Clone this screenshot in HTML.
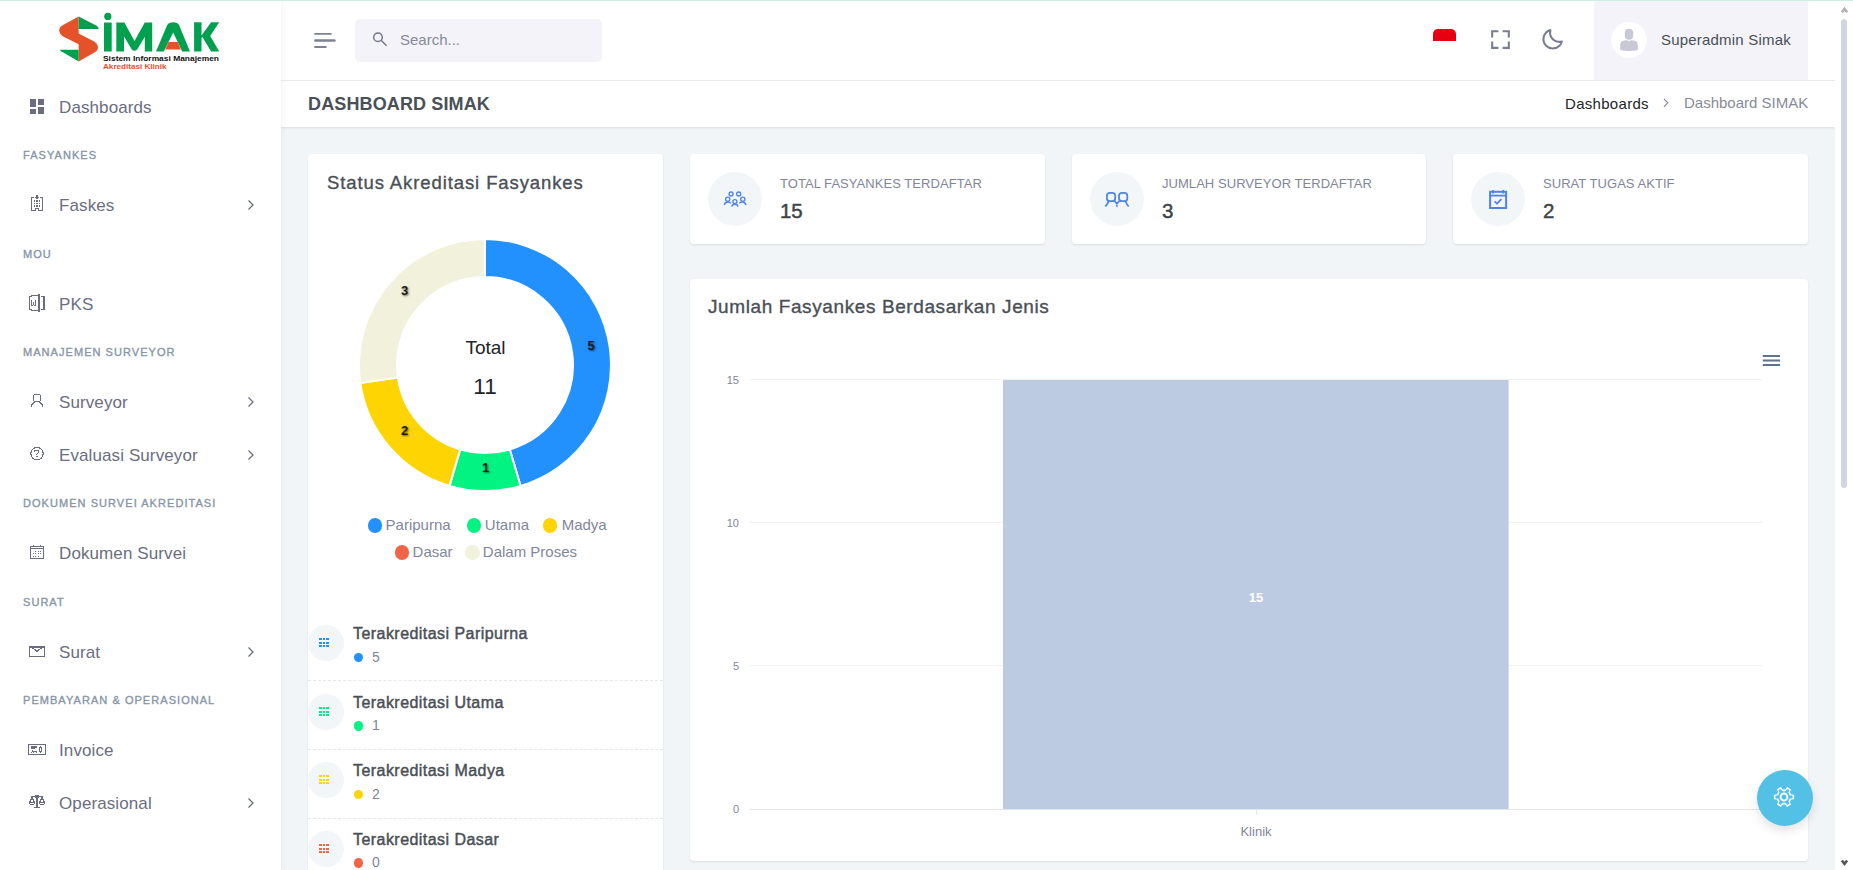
<!DOCTYPE html>
<html><head><meta charset="utf-8">
<style>
*{box-sizing:border-box;margin:0;padding:0}
html,body{width:1853px;height:870px;overflow:hidden}
body{font-family:"Liberation Sans",sans-serif;background:#f1f5f8;position:relative;color:#495057}
.abs{position:absolute}
#topline{left:0;top:0;width:1853px;height:1px;background:#d3ece0;z-index:50}
#sidebar{left:0;top:0;width:281px;height:870px;background:#fff;box-shadow:1px 0 5px rgba(0,0,0,.05);z-index:5}
.mi{position:absolute;left:0;width:281px;height:20px;font-size:17px;color:#6a6e80;white-space:nowrap}
.mi .t{position:absolute;left:59px;top:1.5px;line-height:20px;letter-spacing:.1px}
.mi svg.ic{position:absolute;left:28px;top:1px}
.mi .chev{position:absolute;left:246px;top:5px}
.mt{position:absolute;left:23px;font-size:11px;color:#8795a7;letter-spacing:1.05px;font-weight:normal;-webkit-text-stroke:.35px #8795a7;white-space:nowrap;line-height:12px}
#header{left:281px;top:0;width:1554px;height:81px;background:#fff;border-bottom:1px solid #e9ebef;z-index:3}
#titlebar{left:281px;top:81px;width:1554px;height:46px;background:#fff;box-shadow:0 1px 2px rgba(56,65,74,.12);z-index:2}
.card{position:absolute;background:#fff;border-radius:4px;box-shadow:0 1px 2px rgba(56,65,74,.12)}
#scroll{left:1835px;top:0;width:18px;height:870px;background:#fff;z-index:40}
</style></head><body>
<div id="topline" class="abs"></div>

<!-- SIDEBAR -->
<div id="sidebar" class="abs">
  <!-- logo -->
  <svg class="abs" style="left:0;top:0" width="281" height="80" viewBox="0 0 281 80">
    <g transform="translate(50,8) scale(0.09714)">
      <path d="M295,88 L130,178 Q88,205 95,240 Q102,275 130,290 L295,372 L295,550 L470,450 Q500,430 492,392 Q485,362 455,345 L295,262 Z" fill="#e5522a"/>
      <path d="M295,88 L475,180 Q505,198 500,215 L295,215 Z" fill="#00a04e"/>
      <path d="M100,430 L295,430 L295,550 L115,445 Q98,435 100,430 Z" fill="#00a04e"/>
    </g>
    <g fill="#00a04e">
      <rect x="104" y="22.6" width="7.7" height="28.9" rx="0.6"/>
      <circle cx="107.8" cy="16.4" r="3.6"/>
      <path d="M116.3,51.5 L116.3,22.6 L124.4,22.6 L134.5,41 L144.8,22.6 L152.2,22.6 L152.2,51.5 L144.8,51.5 L144.8,36.8 L137.2,49.6 Q134.5,52 131.8,49.6 L124,36.6 L124,51.5 Z"/>
      <path d="M156,51.5 L167.2,25 Q169,22.3 173.2,22.3 Q177.4,22.3 179,25 L190,51.5 L182.2,51.5 L173.2,32.4 L163.8,51.5 Z"/>
      <path d="M194.1,22.3 L201.5,22.3 L201.5,35.6 L211.1,22.3 L219.2,22.3 L210.2,36 L219.2,51.5 L211.1,51.5 L202.4,37 L201.5,38 L201.5,51.5 L194.1,51.5 Z"/>
    </g>
    <path d="M168.6,42 L177.8,42 L180.8,49.4 L165.3,49.4 Z" fill="#e5522a"/>
    <text x="103" y="60.5" font-family="Liberation Sans" font-weight="bold" font-size="8" fill="#111" textLength="116" lengthAdjust="spacingAndGlyphs">Sistem Informasi Manajemen</text>
    <text x="103" y="68.7" font-family="Liberation Sans" font-weight="bold" font-size="8" fill="#e5522a" textLength="63.6" lengthAdjust="spacingAndGlyphs">Akreditasi Klinik</text>
  </svg>

  <div class="mi" style="top:96px">
    <svg class="ic" width="18" height="18" viewBox="0 0 18 18" style="left:28px;top:1px"><g fill="#6a6e80"><rect x="2" y="2" width="6" height="8"/><rect x="10" y="2" width="6" height="6"/><rect x="2" y="12" width="6" height="5"/><rect x="10" y="10" width="6" height="7"/></g></svg>
    <span class="t">Dashboards</span>
  </div>
  <div class="mt" style="top:149px">FASYANKES</div>
  <div class="mi" style="top:194px">
    <svg class="ic" width="26" height="26" viewBox="0 0 26 26" style="left:24px;top:-4px" shape-rendering="crispEdges"><g fill="#6a6e80"><rect x="7" y="7" width="1" height="14"/><rect x="18" y="7" width="1" height="14"/><rect x="7" y="20" width="5" height="1"/><rect x="14" y="20" width="5" height="1"/><rect x="11" y="18" width="1" height="3"/><rect x="14" y="18" width="1" height="3"/><rect x="11" y="18" width="4" height="1"/><rect x="7" y="7" width="3" height="1"/><rect x="16" y="7" width="3" height="1"/><rect x="12" y="5" width="2" height="4"/><rect x="11" y="7" width="4" height="1"/><rect x="10" y="10" width="1" height="2"/><rect x="12" y="10" width="2" height="2"/><rect x="15" y="10" width="1" height="2"/><rect x="10" y="13" width="1" height="1"/><rect x="12" y="13" width="2" height="1"/><rect x="15" y="13" width="1" height="1"/><rect x="10" y="15" width="1" height="2"/><rect x="12" y="15" width="2" height="2"/><rect x="15" y="15" width="1" height="2"/></g></svg>
    <span class="t">Faskes</span>
    <svg class="chev" width="10" height="12" viewBox="0 0 10 12"><path d="M2.5,1.5 L7,6 L2.5,10.5" fill="none" stroke="#6a6e80" stroke-width="1.3"/></svg>
  </div>
  <div class="mt" style="top:248px">MOU</div>
  <div class="mi" style="top:293px">
    <svg class="ic" width="26" height="26" viewBox="0 0 26 26" style="left:24px;top:-3px" shape-rendering="crispEdges"><g fill="#6a6e80"><rect x="5" y="6" width="1" height="14"/><rect x="5" y="6" width="3" height="1"/><rect x="7" y="5" width="8" height="1"/><rect x="7" y="20" width="8" height="1"/><rect x="5" y="19" width="3" height="1"/><rect x="14" y="4" width="2" height="18"/><rect x="17" y="6" width="3" height="1"/><rect x="19" y="6" width="2" height="14"/><rect x="17" y="19" width="3" height="1"/><rect x="7" y="10" width="1" height="6"/><rect x="11" y="10" width="1" height="6"/><rect x="8" y="15" width="1" height="1"/><rect x="10" y="15" width="1" height="1"/><rect x="9" y="12" width="1" height="3"/></g></svg>
    <span class="t">PKS</span>
  </div>
  <div class="mt" style="top:346px">MANAJEMEN SURVEYOR</div>
  <div class="mi" style="top:391px">
    <svg class="ic" width="26" height="26" viewBox="0 0 26 26" style="left:24px;top:-3px" shape-rendering="crispEdges"><g fill="#6a6e80"><rect x="10" y="6" width="6" height="1"/><rect x="10" y="13" width="6" height="1"/><rect x="9" y="7" width="1" height="6"/><rect x="16" y="7" width="1" height="6"/></g><path d="M10.8,14 L7.8,16.8 V19 M15.2,14 L18.2,16.8 V19" fill="none" stroke="#6a6e80" stroke-width="1.1"/></svg>
    <span class="t">Surveyor</span>
    <svg class="chev" width="10" height="12" viewBox="0 0 10 12"><path d="M2.5,1.5 L7,6 L2.5,10.5" fill="none" stroke="#6a6e80" stroke-width="1.3"/></svg>
  </div>
  <div class="mi" style="top:444px">
    <svg class="ic" width="26" height="26" viewBox="0 0 26 26" style="left:24px;top:-3px" shape-rendering="crispEdges"><circle cx="13" cy="12.6" r="6.2" fill="none" stroke="#6a6e80" stroke-width="1.1"/><path d="M10.9,11 V9.9 H14.6 V11.4 L12.9,13 V13.8" fill="none" stroke="#6a6e80" stroke-width="1.1"/><rect x="12" y="15" width="2" height="1" fill="#6a6e80"/></svg>
    <span class="t">Evaluasi Surveyor</span>
    <svg class="chev" width="10" height="12" viewBox="0 0 10 12"><path d="M2.5,1.5 L7,6 L2.5,10.5" fill="none" stroke="#6a6e80" stroke-width="1.3"/></svg>
  </div>
  <div class="mt" style="top:497px">DOKUMEN SURVEI AKREDITASI</div>
  <div class="mi" style="top:542px">
    <svg class="ic" width="26" height="26" viewBox="0 0 26 26" style="left:24px;top:-3px" shape-rendering="crispEdges"><g fill="#6a6e80"><rect x="6" y="7" width="14" height="1"/><rect x="6" y="19" width="14" height="1"/><rect x="6" y="7" width="1" height="13"/><rect x="19" y="7" width="1" height="13"/><rect x="6" y="9" width="14" height="1"/><rect x="9" y="6" width="1" height="2"/><rect x="16" y="6" width="1" height="2"/><rect x="11" y="12" width="1" height="1"/><rect x="14" y="12" width="1" height="1"/><rect x="16" y="12" width="1" height="1"/><rect x="9" y="14" width="1" height="1"/><rect x="11" y="14" width="1" height="1"/><rect x="14" y="14" width="1" height="1"/><rect x="16" y="14" width="1" height="1"/><rect x="9" y="17" width="1" height="1"/><rect x="11" y="17" width="1" height="1"/><rect x="14" y="17" width="1" height="1"/></g></svg>
    <span class="t">Dokumen Survei</span>
  </div>
  <div class="mt" style="top:596px">SURAT</div>
  <div class="mi" style="top:641px">
    <svg class="ic" width="26" height="26" viewBox="0 0 26 26" style="left:24px;top:-3px" shape-rendering="crispEdges"><g fill="#6a6e80"><rect x="5" y="8" width="16" height="2"/><rect x="5" y="18" width="16" height="1"/><rect x="5" y="8" width="1" height="11"/><rect x="20" y="8" width="1" height="11"/></g><path d="M8.2,9.6 L13,13.4 L17.8,9.6" fill="none" stroke="#6a6e80" stroke-width="1.2"/></svg>
    <span class="t">Surat</span>
    <svg class="chev" width="10" height="12" viewBox="0 0 10 12"><path d="M2.5,1.5 L7,6 L2.5,10.5" fill="none" stroke="#6a6e80" stroke-width="1.3"/></svg>
  </div>
  <div class="mt" style="top:694px">PEMBAYARAN &amp; OPERASIONAL</div>
  <div class="mi" style="top:739px">
    <svg class="ic" width="26" height="26" viewBox="0 0 26 26" style="left:24px;top:-3px" shape-rendering="crispEdges"><g fill="#6a6e80"><rect x="4" y="8" width="18" height="1"/><rect x="4" y="18" width="18" height="1"/><rect x="4" y="8" width="1" height="11"/><rect x="21" y="8" width="1" height="11"/><rect x="7" y="10" width="6" height="2"/><rect x="7" y="12" width="4" height="1"/></g><path d="M7.5,16.6 L8.6,14.6 L9.6,16.6 V15.3 H12.5 V16.6" fill="none" stroke="#6a6e80" stroke-width="1"/><g fill="none" stroke="#6a6e80" stroke-width="1"><rect x="15.5" y="11.5" width="2" height="4" rx=".8"/><path d="M16.5,10 V11.5 M16.5,15.5 V17 M15,12.5 H15.5"/></g></svg>
    <span class="t">Invoice</span>
  </div>
  <div class="mi" style="top:792px">
    <svg class="ic" width="26" height="26" viewBox="0 0 26 26" style="left:24px;top:-3px" shape-rendering="crispEdges"><g fill="#6a6e80"><rect x="7" y="7" width="12" height="1"/><rect x="12" y="9" width="2" height="9"/><rect x="10" y="18" width="6" height="1"/><rect x="7" y="7" width="2" height="3"/><rect x="17" y="7" width="2" height="3"/></g><g fill="none" stroke="#6a6e80" stroke-width="1"><rect x="11.5" y="6.5" width="3" height="2"/><path d="M6.5,10.5 H9.5 V12.5 H10.5 V14.5 L9.5,15.5 H6.5 L5.5,14.5 V12.5 H6.5 Z M5.5,13.5 H10.5"/><path d="M16.5,10.5 H19.5 V12.5 H20.5 V14.5 L19.5,15.5 H16.5 L15.5,14.5 V12.5 H16.5 Z M15.5,13.5 H20.5"/></g></svg>
    <span class="t">Operasional</span>
    <svg class="chev" width="10" height="12" viewBox="0 0 10 12"><path d="M2.5,1.5 L7,6 L2.5,10.5" fill="none" stroke="#6a6e80" stroke-width="1.3"/></svg>
  </div>
</div>

<!-- HEADER -->
<div id="header" class="abs">
  <svg class="abs" style="left:31px;top:30px" width="26" height="20" viewBox="0 0 26 20"><g stroke="#7c8193" stroke-linecap="round"><path d="M2.95,3.9 H18.95" stroke-width="1.7"/><path d="M3.4,10.5 H22.4" stroke-width="2.6"/><path d="M3,17 H13.9" stroke-width="1.8"/></g></svg>
  <div class="abs" style="left:74px;top:19px;width:247px;height:43px;background:#f3f3f9;border-radius:5px"></div>
  <svg class="abs" style="left:90px;top:31px" width="18" height="18" viewBox="0 0 18 18"><g fill="none" stroke="#737889" stroke-width="1.5"><circle cx="7" cy="6.2" r="4.3"/><path d="M10.1,9.3 L15.6,14.8"/></g></svg>
  <div class="abs" style="left:119px;top:31px;font-size:15px;color:#878a99;line-height:18px">Search...</div>

  <div class="abs" style="left:1152px;top:29px;width:23px;height:12px;background:#e70011;border-radius:5px 5px 0 0"></div>
  <svg class="abs" style="left:1207px;top:27px" width="25" height="25" viewBox="0 0 24 24"><path fill="#787d8f" d="M5 5h5V3H3v7h2zm5 14H5v-5H3v7h7zm11-5h-2v5h-5v2h7zm-2-4h2V3h-7v2h5z"/></svg>
  <svg class="abs" style="left:1259px;top:27px" width="25" height="25" viewBox="0 0 24 24"><path fill="#787d8f" d="M20.742 13.045a8.088 8.088 0 0 1-2.077.271c-2.135 0-4.14-.83-5.646-2.336a8.025 8.025 0 0 1-2.064-7.723A1 1 0 0 0 9.73 2.034a10.014 10.014 0 0 0-4.489 2.582c-3.898 3.898-3.898 10.243 0 14.143a9.937 9.937 0 0 0 7.072 2.93 9.93 9.93 0 0 0 7.07-2.929 10.007 10.007 0 0 0 2.583-4.491 1.001 1.001 0 0 0-1.224-1.224zm-2.772 4.301a7.947 7.947 0 0 1-5.656 2.343 7.953 7.953 0 0 1-5.658-2.344c-3.118-3.119-3.118-8.195 0-11.314a7.923 7.923 0 0 1 2.06-1.483 10.027 10.027 0 0 0 2.89 7.848 9.972 9.972 0 0 0 7.848 2.891 8.036 8.036 0 0 1-1.484 2.059z"/></svg>

  <div class="abs" style="left:1313px;top:0;width:214px;height:80px;background:#f3f3f9">
    <div class="abs" style="left:17px;top:22px;width:36px;height:36px;border-radius:50%;background:#fff;overflow:hidden">
      <svg width="36" height="36" viewBox="0 0 36 36"><g fill="#c9c8d7"><path d="M13.8,11 Q13.8,6.8 18,6.8 Q22.2,6.8 22.2,11 V13.5 Q22.2,17.7 18,17.7 Q13.8,17.7 13.8,13.5 Z"/><path d="M9.2,28 V23 Q9.2,19 13.2,18.6 L16,18.3 Q18,19.6 20,18.3 L22.8,18.6 Q26.8,19 26.8,23 V28 Q18,30 9.2,28 Z"/></g></svg>
    </div>
    <div class="abs" style="left:67px;top:30px;font-size:15px;color:#495057;line-height:20px;letter-spacing:.2px;white-space:nowrap">Superadmin Simak</div>
  </div>
</div>

<!-- TITLE BAR -->
<div id="titlebar" class="abs">
  <div class="abs" style="left:27px;top:13px;font-size:18px;font-weight:bold;color:#495057;letter-spacing:.13px;line-height:20px;white-space:nowrap">DASHBOARD SIMAK</div>
  <div class="abs" style="left:1284px;top:12.5px;font-size:15px;color:#212529;line-height:20px;white-space:nowrap;letter-spacing:.3px">Dashboards</div>
  <svg class="abs" style="left:1380px;top:16px" width="10" height="12" viewBox="0 0 10 12"><path d="M3,1.8 L6.8,5.8 L3,9.8" fill="none" stroke="#878a99" stroke-width="1.2"/></svg>
  <div class="abs" style="left:1403px;top:12px;font-size:15px;color:#878a99;line-height:20px;white-space:nowrap">Dashboard SIMAK</div>
</div>

<!-- CONTENT -->
<div id="c1" class="card" style="left:308px;top:154px;width:355px;height:740px">
  <div class="abs" style="left:19px;top:17.5px;font-size:18.5px;font-weight:normal;-webkit-text-stroke:.35px #495057;color:#495057;letter-spacing:.9px;line-height:22px;white-space:nowrap">Status Akreditasi Fasyankes</div>
  <svg class="abs" style="left:0;top:0" width="355" height="420" viewBox="0 0 355 420">
    <path d="M177.00,85.00 A126,126 0 0,1 212.50,331.89 L201.79,295.43 A88,88 0 0,0 177.00,123.00 Z" fill="#2290fd" stroke="#fff" stroke-width="2"/>
    <path d="M212.50,331.89 A126,126 0 0,1 141.50,331.89 L152.21,295.43 A88,88 0 0,0 201.79,295.43 Z" fill="#03f383" stroke="#fff" stroke-width="2"/>
    <path d="M141.50,331.89 A126,126 0 0,1 52.28,228.93 L89.90,223.52 A88,88 0 0,0 152.21,295.43 Z" fill="#fed402" stroke="#fff" stroke-width="2"/>
    <path d="M52.28,228.93 A126,126 0 0,1 177.00,85.00 L177.00,123.00 A88,88 0 0,0 89.90,223.52 Z" fill="#f2f2dc" stroke="#fff" stroke-width="2"/>
    <g font-family="Liberation Sans" font-weight="bold" font-size="13" text-anchor="middle" fill="#1e1e1e" style="text-shadow:1px 1px 2px rgba(0,0,0,.55)">
      <text x="283" y="196">5</text><text x="177.5" y="318">1</text><text x="96.5" y="281">2</text><text x="96.5" y="141">3</text>
    </g>
    <text x="177.5" y="200.3" font-family="Liberation Sans" font-size="19" text-anchor="middle" fill="#212529">Total</text>
    <text x="177" y="239.5" font-family="Liberation Sans" font-size="22.5" text-anchor="middle" fill="#212529">11</text>
  </svg>
  <div class="abs" style="left:0;top:361px;width:355px;height:20px;font-size:15px;color:#7f869c;white-space:nowrap">
    <span class="abs" style="left:59.7px;top:3px;width:14.5px;height:14.5px;border-radius:50%;background:#2290fd"></span><span class="abs" style="left:77.6px;top:0;line-height:20px;letter-spacing:0">Paripurna</span>
    <span class="abs" style="left:158.6px;top:3px;width:14.5px;height:14.5px;border-radius:50%;background:#03f383"></span><span class="abs" style="left:176.8px;top:0;line-height:20px;letter-spacing:0">Utama</span>
    <span class="abs" style="left:234.8px;top:3px;width:14.5px;height:14.5px;border-radius:50%;background:#fed402"></span><span class="abs" style="left:253.7px;top:0;line-height:20px;letter-spacing:0">Madya</span>
  </div>
  <div class="abs" style="left:0;top:388px;width:355px;height:20px;font-size:15px;color:#7f869c;white-space:nowrap">
    <span class="abs" style="left:86.8px;top:3px;width:14.5px;height:14.5px;border-radius:50%;background:#f06548"></span><span class="abs" style="left:104.6px;top:0;line-height:20px;letter-spacing:0">Dasar</span>
    <span class="abs" style="left:157px;top:3px;width:14.5px;height:14.5px;border-radius:50%;background:#f2f2dc"></span><span class="abs" style="left:174.8px;top:0;line-height:20px;letter-spacing:0">Dalam Proses</span>
  </div>
  <div class="abs" style="left:0;top:471.0px;width:355px;height:68px">
    <div class="abs" style="left:0;top:0;width:36px;height:36px;border-radius:50%;background:#f3f6f9"></div>
    <svg class="abs" style="left:11px;top:13px" width="11" height="10" viewBox="0 0 11 10" shape-rendering="crispEdges"><g fill="#2290fd"><rect x="0" y="0" width="3" height="2"/><rect x="4" y="0" width="2" height="2"/><rect x="7" y="0" width="3" height="2"/><rect x="0" y="4" width="3" height="2"/><rect x="4" y="4" width="2" height="2"/><rect x="7" y="4" width="3" height="2"/><rect x="0" y="7" width="3" height="2"/><rect x="4" y="7" width="2" height="2"/><rect x="7" y="7" width="3" height="2"/></g></svg>
    <div class="abs" style="left:45px;top:0;font-size:16px;font-weight:normal;-webkit-text-stroke:.45px #495057;color:#495057;line-height:20px;white-space:nowrap;letter-spacing:.45px;margin-top:-1px">Terakreditasi Paripurna</div>
    <span class="abs" style="left:45.5px;top:27.5px;width:9.5px;height:9.5px;border-radius:50%;background:#2290fd"></span>
    <div class="abs" style="left:64px;top:21.5px;font-size:14px;color:#7f869c;line-height:20px">5</div>
    </div><div class="abs" style="left:0;top:526.4px;width:355px;height:0;border-top:1px dashed #e4e7eb"></div><div class="abs" style="left:0;top:539.6px;width:355px;height:68px">
    <div class="abs" style="left:0;top:0;width:36px;height:36px;border-radius:50%;background:#f3f6f9"></div>
    <svg class="abs" style="left:11px;top:13px" width="11" height="10" viewBox="0 0 11 10" shape-rendering="crispEdges"><g fill="#03f383"><rect x="0" y="0" width="3" height="2"/><rect x="4" y="0" width="2" height="2"/><rect x="7" y="0" width="3" height="2"/><rect x="0" y="4" width="3" height="2"/><rect x="4" y="4" width="2" height="2"/><rect x="7" y="4" width="3" height="2"/><rect x="0" y="7" width="3" height="2"/><rect x="4" y="7" width="2" height="2"/><rect x="7" y="7" width="3" height="2"/></g></svg>
    <div class="abs" style="left:45px;top:0;font-size:16px;font-weight:normal;-webkit-text-stroke:.45px #495057;color:#495057;line-height:20px;white-space:nowrap;letter-spacing:.45px;margin-top:-1px">Terakreditasi Utama</div>
    <span class="abs" style="left:45.5px;top:27.5px;width:9.5px;height:9.5px;border-radius:50%;background:#03f383"></span>
    <div class="abs" style="left:64px;top:21.5px;font-size:14px;color:#7f869c;line-height:20px">1</div>
    </div><div class="abs" style="left:0;top:595.0px;width:355px;height:0;border-top:1px dashed #e4e7eb"></div><div class="abs" style="left:0;top:608.2px;width:355px;height:68px">
    <div class="abs" style="left:0;top:0;width:36px;height:36px;border-radius:50%;background:#f3f6f9"></div>
    <svg class="abs" style="left:11px;top:13px" width="11" height="10" viewBox="0 0 11 10" shape-rendering="crispEdges"><g fill="#fed402"><rect x="0" y="0" width="3" height="2"/><rect x="4" y="0" width="2" height="2"/><rect x="7" y="0" width="3" height="2"/><rect x="0" y="4" width="3" height="2"/><rect x="4" y="4" width="2" height="2"/><rect x="7" y="4" width="3" height="2"/><rect x="0" y="7" width="3" height="2"/><rect x="4" y="7" width="2" height="2"/><rect x="7" y="7" width="3" height="2"/></g></svg>
    <div class="abs" style="left:45px;top:0;font-size:16px;font-weight:normal;-webkit-text-stroke:.45px #495057;color:#495057;line-height:20px;white-space:nowrap;letter-spacing:.45px;margin-top:-1px">Terakreditasi Madya</div>
    <span class="abs" style="left:45.5px;top:27.5px;width:9.5px;height:9.5px;border-radius:50%;background:#fed402"></span>
    <div class="abs" style="left:64px;top:21.5px;font-size:14px;color:#7f869c;line-height:20px">2</div>
    </div><div class="abs" style="left:0;top:663.6px;width:355px;height:0;border-top:1px dashed #e4e7eb"></div><div class="abs" style="left:0;top:676.8px;width:355px;height:68px">
    <div class="abs" style="left:0;top:0;width:36px;height:36px;border-radius:50%;background:#f3f6f9"></div>
    <svg class="abs" style="left:11px;top:13px" width="11" height="10" viewBox="0 0 11 10" shape-rendering="crispEdges"><g fill="#f06548"><rect x="0" y="0" width="3" height="2"/><rect x="4" y="0" width="2" height="2"/><rect x="7" y="0" width="3" height="2"/><rect x="0" y="4" width="3" height="2"/><rect x="4" y="4" width="2" height="2"/><rect x="7" y="4" width="3" height="2"/><rect x="0" y="7" width="3" height="2"/><rect x="4" y="7" width="2" height="2"/><rect x="7" y="7" width="3" height="2"/></g></svg>
    <div class="abs" style="left:45px;top:0;font-size:16px;font-weight:normal;-webkit-text-stroke:.45px #495057;color:#495057;line-height:20px;white-space:nowrap;letter-spacing:.45px;margin-top:-1px">Terakreditasi Dasar</div>
    <span class="abs" style="left:45.5px;top:27.5px;width:9.5px;height:9.5px;border-radius:50%;background:#f06548"></span>
    <div class="abs" style="left:64px;top:21.5px;font-size:14px;color:#7f869c;line-height:20px">0</div>
    </div>
</div>
<div id="s1" class="card" style="left:690px;top:154px;width:355px;height:90px">
  <div class="abs" style="left:18px;top:18px;width:54px;height:54px;border-radius:50%;background:#f3f6f9"></div>
  <svg class="abs" style="left:33px;top:36px" width="24" height="20" viewBox="0 0 24 20"><g fill="none" stroke="#4f84e6" stroke-width="1.35"><circle cx="8.1" cy="4" r="2"/><circle cx="15.7" cy="4" r="2"/><circle cx="4.7" cy="9.2" r="2.1"/><circle cx="19.8" cy="9.2" r="2.1"/><circle cx="11.9" cy="11.6" r="2"/><path d="M1.3,15.2 Q1.8,12 4.8,12 Q7,12 8,13.4"/><path d="M22.9,15.2 Q22.4,12 19.6,12 Q17.2,12 16.2,13.4"/><path d="M8.8,16.6 Q9,14.2 11.9,14.2 Q14.8,14.2 15,16.6"/></g></svg>
  <div class="abs" style="left:90px;top:21.5px;font-size:13px;color:#7f869c;line-height:16px;white-space:nowrap;letter-spacing:.05px">TOTAL FASYANKES TERDAFTAR</div>
  <div class="abs" style="left:90px;top:44px;font-size:20.5px;font-weight:normal;-webkit-text-stroke:.45px #3d434a;color:#3d434a;line-height:26px;letter-spacing:-.2px">15</div>
</div>
<div id="s2" class="card" style="left:1072px;top:154px;width:354px;height:90px">
  <div class="abs" style="left:18px;top:18px;width:54px;height:54px;border-radius:50%;background:#f3f6f9"></div>
  <svg class="abs" style="left:32px;top:36px" width="26" height="20" viewBox="0 0 26 20"><g fill="none" stroke="#4f84e6" stroke-width="1.75"><rect x="2.9" y="2.8" width="8.3" height="8.4" rx="3"/><rect x="15" y="2.8" width="8.3" height="8.4" rx="3"/><path d="M1.4,16.6 L4.8,11.6 M24.6,16.6 L21.4,11.6 M10.6,11.2 L12.9,13.8 L15.2,11.2 M12.9,13.8 V16.8"/></g></svg>
  <div class="abs" style="left:90px;top:21.5px;font-size:13px;color:#7f869c;line-height:16px;white-space:nowrap;letter-spacing:.05px">JUMLAH SURVEYOR TERDAFTAR</div>
  <div class="abs" style="left:90px;top:44px;font-size:20.5px;font-weight:normal;-webkit-text-stroke:.45px #3d434a;color:#3d434a;line-height:26px;letter-spacing:-.2px">3</div>
</div>
<div id="s3" class="card" style="left:1453px;top:154px;width:355px;height:90px">
  <div class="abs" style="left:18px;top:18px;width:54px;height:54px;border-radius:50%;background:#f3f6f9"></div>
  <svg class="abs" style="left:34px;top:35px" width="22" height="22" viewBox="0 0 22 22"><g fill="none" stroke="#4f84e6"><rect x="3.1" y="2.8" width="16" height="16.2" stroke-width="2"/><path d="M3.1,6.6 H19.1" stroke-width="1.8"/><path d="M6,1 V4.6 M16.2,1 V4.6" stroke-width="1.8"/><path d="M7.6,12.4 L10,14.6 L14.4,10.2" stroke-width="1.8"/></g></svg>
  <div class="abs" style="left:90px;top:21.5px;font-size:13px;color:#7f869c;line-height:16px;white-space:nowrap;letter-spacing:.05px">SURAT TUGAS AKTIF</div>
  <div class="abs" style="left:90px;top:44px;font-size:20.5px;font-weight:normal;-webkit-text-stroke:.45px #3d434a;color:#3d434a;line-height:26px;letter-spacing:-.2px">2</div>
</div>
<div id="ch" class="card" style="left:690px;top:279px;width:1118px;height:582px">
  <div class="abs" style="left:18px;top:16.5px;font-size:19px;font-weight:normal;-webkit-text-stroke:.35px #495057;color:#495057;letter-spacing:.6px;line-height:22px;white-space:nowrap">Jumlah Fasyankes Berdasarkan Jenis</div>
  <svg class="abs" style="left:0;top:0" width="1118" height="582" viewBox="0 0 1118 582">
    <g stroke="#f1f1f1" stroke-width="1"><path d="M60,100.5 H1072 M60,243.5 H1072 M60,386.5 H1072"/></g>
    <path d="M60,530.5 H1072" stroke="#e6e6e6" stroke-width="1"/>
    <path d="M566.5,531 V536" stroke="#e6e6e6" stroke-width="1"/>
    <rect x="313" y="101" width="505.6" height="429" fill="#bccbe2"/>
    <g font-family="Liberation Sans" font-size="11" fill="#7f869c" text-anchor="end">
      <text x="49" y="105">15</text><text x="49" y="248">10</text><text x="49" y="391">5</text><text x="49" y="534">0</text>
    </g>
    <text x="566" y="323" font-family="Liberation Sans" font-weight="bold" font-size="13" fill="#fff" text-anchor="middle">15</text>
    <text x="566" y="557" font-family="Liberation Sans" font-size="13" fill="#7f869c" text-anchor="middle">Klinik</text>
    <g stroke="#5f738c" stroke-width="2"><path d="M1072.8,77 H1090 M1072.8,81.5 H1090 M1072.8,86 H1090"/></g>
  </svg>
</div>
<div class="abs" style="left:1757px;top:770px;width:56px;height:56px;border-radius:50%;background:#52c1e5;box-shadow:0 5px 10px rgba(30,32,37,.12);z-index:10">
  <svg class="abs" style="left:15.4px;top:15.4px" width="24" height="24" viewBox="0 0 24 24"><path fill="#fff" fill-rule="evenodd" d="M19.14,9.40 L22.13,9.66 L22.13,14.34 L19.14,14.60 L17.82,16.89 L19.09,19.61 L15.04,21.95 L13.32,19.48 L10.68,19.48 L8.96,21.95 L4.91,19.61 L6.18,16.89 L4.86,14.60 L1.87,14.34 L1.87,9.66 L4.86,9.40 L6.18,7.11 L4.91,4.39 L8.96,2.05 L10.68,4.52 L13.32,4.52 L15.04,2.05 L19.09,4.39 L17.82,7.11 Z M17.74,10.25 L20.59,10.64 L20.59,13.36 L17.74,13.75 L16.39,16.09 L17.48,18.76 L15.12,20.12 L13.35,17.85 L10.65,17.85 L8.88,20.12 L6.52,18.76 L7.61,16.09 L6.26,13.75 L3.41,13.36 L3.41,10.64 L6.26,10.25 L7.61,7.91 L6.52,5.24 L8.88,3.88 L10.65,6.15 L13.35,6.15 L15.12,3.88 L17.48,5.24 L16.39,7.91 Z M16.40,12 A4.4,4.4 0 1,0 7.60,12 A4.4,4.4 0 1,0 16.40,12 Z M14.50,12 A2.5,2.5 0 1,0 9.50,12 A2.5,2.5 0 1,0 14.50,12 Z"/></svg>
</div>

<!-- SCROLLBAR -->
<div id="scroll" class="abs">
  <svg class="abs" style="left:0;top:0" width="18" height="870" viewBox="0 0 18 870">
    <path d="M6.9,12.3 L9.5,8.9 L12.1,12.3" fill="none" stroke="#b0b0b0" stroke-width="2.6"/>
    <rect x="6" y="19" width="6" height="469" rx="3" fill="#cfd8e1"/>
    <path d="M6.9,860.5 L9.5,863.9 L12.1,860.5" fill="none" stroke="#555" stroke-width="2.6"/>
  </svg>
</div>
</body></html>
